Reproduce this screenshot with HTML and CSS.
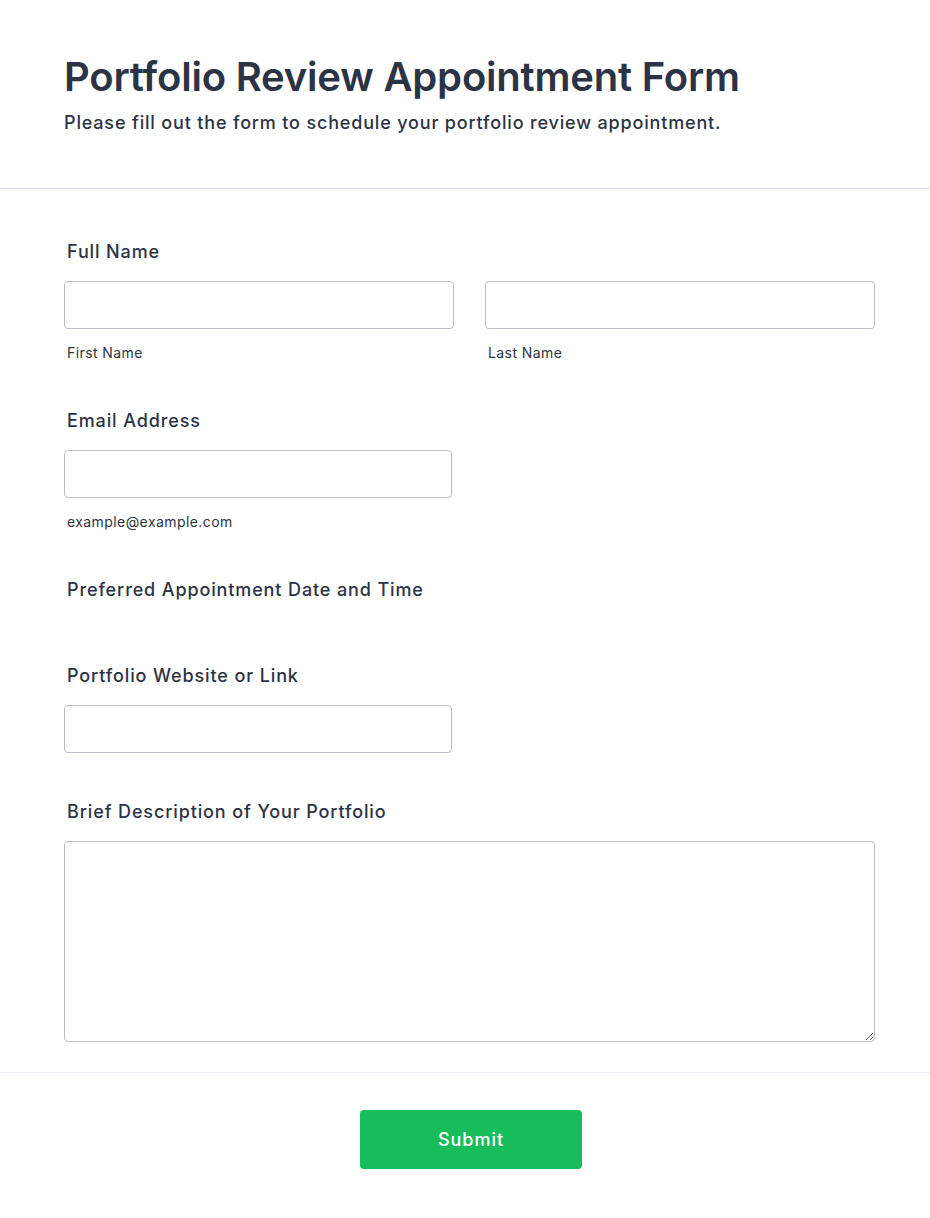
FILE: index.html
```html
<!DOCTYPE html>
<html lang="en">
<head>
<meta charset="utf-8">
<title>Portfolio Review Appointment Form</title>
<link rel="stylesheet" href="styles.css">
</head>
<body>
<div class="page">
  <header class="form-header">
    <h1 class="form-title">Portfolio Review Appointment Form</h1>
    <p class="form-subtitle">Please fill out the form to schedule your portfolio review appointment.</p>
  </header>
  <main class="form-body">
    <div class="field">
      <label class="field-label">Full Name</label>
      <div class="name-row">
        <div class="name-col">
          <input class="input" type="text">
          <span class="sublabel">First Name</span>
        </div>
        <div class="name-col">
          <input class="input" type="text">
          <span class="sublabel">Last Name</span>
        </div>
      </div>
    </div>
    <div class="field">
      <label class="field-label">Email Address</label>
      <div class="half">
        <input class="input" type="email">
        <span class="sublabel">example@example.com</span>
      </div>
    </div>
    <div class="field field-date">
      <label class="field-label">Preferred Appointment Date and Time</label>
    </div>
    <div class="field">
      <label class="field-label">Portfolio Website or Link</label>
      <div class="half">
        <input class="input" type="text">
      </div>
    </div>
    <div class="field field-last">
      <label class="field-label">Brief Description of Your Portfolio</label>
      <textarea class="textarea"></textarea>
    </div>
  </main>
  <footer class="form-footer">
    <button class="submit" type="button">Submit</button>
  </footer>
</div>
</body>
</html>
```

FILE: styles.css
```css
* { box-sizing: border-box; }
html, body { margin: 0; padding: 0; background: #ffffff; }
body {
  font-family: Inter, "Noto Sans", sans-serif;
  color: #2c3345;
}
.page { width: 930px; }

.form-header {
  padding: 53px 64px 53px;
  border-bottom: 1px solid #d8d9e8;
}
.form-title {
  margin: 0;
  font-size: 40px;
  line-height: 48px;
  font-weight: 600;
  letter-spacing: -0.2px;
}
.form-subtitle {
  margin: 10px 0 0;
  font-size: 18px;
  line-height: 24px;
  font-weight: 500;
  letter-spacing: 0.83px;
}

.form-body {
  padding: 50px 55px 30px 64px;
  border-bottom: 1px solid #e8e9f0;
}
.field { margin-bottom: 46px; display: flex; flex-direction: column; }
.field-last { margin-bottom: 0; }
.field-label {
  display: block;
  padding-left: 3px;
  padding-top: 1px;
  font-size: 18px;
  line-height: 24px;
  font-weight: 500;
  letter-spacing: 0.88px;
  margin-bottom: 17px;
}
.field-date .field-label { margin-bottom: 15px; }

.name-row { display: flex; gap: 31px; }
.name-col { width: 390px; display: flex; flex-direction: column; }
.half { width: 388px; display: flex; flex-direction: column; }

.input {
  display: block;
  width: 100%;
  height: 48px;
  border: 1px solid #b8bdc9;
  border-radius: 4px;
  background: #fff;
  font: inherit;
  padding: 0 10px;
}
.sublabel {
  display: block;
  margin-top: 15px;
  padding-left: 3px;
  font-size: 14px;
  line-height: 18px;
  font-weight: 400;
  letter-spacing: 0.42px;
}
.textarea {
  display: block;
  width: 811px;
  height: 201px;
  border: 1px solid #b8bdc9;
  border-radius: 4px;
  background: #fff;
  font: inherit;
  padding: 10px;
}

.form-footer {
  padding: 37px 0 50px 12px;
  display: flex;
  justify-content: center;
}
.submit {
  width: 222px;
  height: 59px;
  border: none;
  border-radius: 4px;
  background: #18bd5b;
  color: #ffffff;
  font-family: Inter, "Noto Sans", sans-serif;
  font-size: 18px;
  font-weight: 500;
  letter-spacing: 1px;
}
```
